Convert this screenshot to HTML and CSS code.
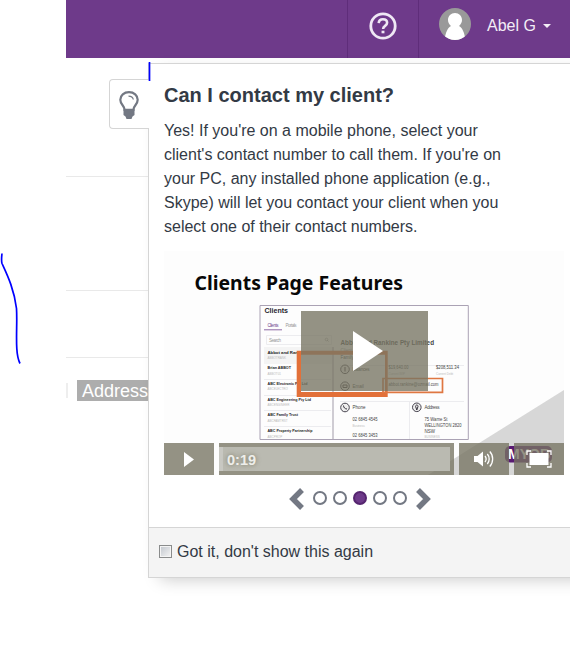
FILE: index.html
```html
<!DOCTYPE html>
<html lang="en">
<head>
<meta charset="utf-8">
<title>Clients</title>
<link rel="stylesheet" href="styles.css">
</head>
<body>
<div class="page">
  <header class="topbar">
    <a class="help" aria-label="Help">
      <svg width="28" height="28" viewBox="0 0 28 28" fill="none" stroke="#efe8f4"><circle cx="14" cy="14" r="12.2" stroke-width="2.800"/><path d="M9.700 11.200c.2-2.500 1.800-3.900 4.200-3.900 2.500 0 4.200 1.400 4.200 3.500 0 3.200-4 3-4 6.200" stroke-width="2.600"/><path d="M14 18.700v2.600" stroke-width="2.900"/></svg>
    </a>
    <div class="user">
      <svg class="avatar" width="32" height="32" viewBox="0 0 32 32"><defs><clipPath id="face"><circle cx="16" cy="16" r="16"/></clipPath></defs><g clip-path="url(#face)"><path fill="#999" d="M0 0h32v32H0z"/><path fill="#fff" d="M16 5c4 0 7 3 7 7 0 2.400-1.200 4.600-3 6 3.200 1.800 5.400 6 6.500 14h-21C6.600 24 8.800 19.800 12 18c-1.800-1.400-3-3.600-3-6 0-4 3-7 7-7z"/></g></svg>
      <span class="user-name">Abel G</span>
      <span class="caret"></span>
    </div>
  </header>
  <main class="content">
    <div class="row row-first"></div>
    <div class="row row-second"></div>
    <div class="row row-third"></div>
    <div class="tags"><span class="tag-edge"></span><span class="tag">Address</span></div>
  </main>
</div>

<section class="tip">
  <div class="tip-tab">
    <svg width="20" height="28" viewBox="0 0 20 28"><path d="M5.600 18.800c0-4-4.300-5.200-4.300-10C1.300 4.500 5 1.200 10 1.200s8.700 3.300 8.700 7.600c0 4.800-4.300 6-4.300 10z" fill="#fff" stroke="#737883" stroke-width="2.200"/><path d="M9.500 5.200c2.800 0 4.400 1.200 4.800 3.300" fill="none" stroke="#737883" stroke-width="1.300"/><path d="M4.500 18h11v6l-2 1.500-1 2.500h-5l-1-2.500-2-1.500z" fill="#737883"/></svg>
  </div>
  <div class="tip-body">
    <h1>Can I contact my client?</h1>
    <p>Yes! If you're on a mobile phone, select your client's contact number to call them. If you're on your PC, any installed phone application (e.g., Skype) will let you contact your client when you select one of their contact numbers.</p>
    <div class="video">
      <svg class="frame" width="400" height="224" viewBox="164 251 400 224">
        <path fill="#fdfdfd" d="M164 251h400v224H164z"/>
        <path fill="#d7d7d7" d="M564 390v85H428z"/>
        <text class="slide-title" x="194.500" y="290" textLength="208.500" lengthAdjust="spacingAndGlyphs">Clients Page Features</text>
        <path d="M260 305.500h208.300v134H260z" fill="#fdfdfd" stroke="#aaa2b4"/>
        <path fill="#f4f4f4" d="M264 347h68v17h-68z"/>
        <path fill="#cfccd3" d="M332 347h2v92h-2z"/>
        <path d="M264 329.800h18" stroke="#8d6aa5"/>
        <path d="M266.500 335.500h65v9h-65zM264 379.500h67M264 395.500h67M264 410.500h67M264 426.500h67M340 365.500h124M340 401.500h124M409.500 402v37" fill="none" stroke="#ececef"/>
        <g class="shot">
          <text class="app-title" x="264.500" y="313" textLength="23.500" lengthAdjust="spacingAndGlyphs">Clients</text>
          <text x="267.500" y="326.500" fill="#73458e" textLength="11">Clients</text>
          <text class="soft" x="285.500" y="326.500" textLength="11">Portals</text>
          <text class="soft" x="269" y="341.700" textLength="12">Search</text>
          <g class="names">
            <text x="267.500" y="353.500" textLength="39" lengthAdjust="spacingAndGlyphs">Abbot and Rankine</text>
            <text x="267.500" y="369.200" textLength="23.500" lengthAdjust="spacingAndGlyphs">Brian ABBOT</text>
            <text x="267.500" y="384.900" textLength="40" lengthAdjust="spacingAndGlyphs">ABC Electronic Pty Ltd</text>
            <text x="267.500" y="400.700" textLength="43.500" lengthAdjust="spacingAndGlyphs">ABC Engineering Pty Ltd</text>
            <text x="267.500" y="416.400" textLength="30.500" lengthAdjust="spacingAndGlyphs">ABC Family Trust</text>
            <text x="267.500" y="432.200" textLength="45" lengthAdjust="spacingAndGlyphs">ABC Property Partnership</text>
          </g>
          <g class="codes">
            <text x="267.500" y="358.800">ABBOTRANK</text><text x="267.500" y="374.500">ABBOT01</text><text x="267.500" y="390.200">ABCELECTRO</text><text x="267.500" y="406">ABCENGINEER</text><text x="267.500" y="421.700">ABCFAMTRST</text><text x="267.500" y="437.500">ABCPROP</text>
          </g>
          <text class="firm" x="340.500" y="344.700" textLength="93.500" lengthAdjust="spacingAndGlyphs">Abbot and Rankine Pty Limited</text>
          <text class="soft" x="340.500" y="351.500">Client Group</text>
          <text x="340.500" y="359">Family</text>
          <text x="352.500" y="371" textLength="17">Balances</text><text x="352.500" y="388">Email</text><text x="352.500" y="409.200">Phone</text><text x="424.500" y="409.200" textLength="15">Address</text>
          <text x="388.500" y="369.200" textLength="20" lengthAdjust="spacingAndGlyphs">$19,640.00</text><text x="436" y="369.200" textLength="23" lengthAdjust="spacingAndGlyphs">$208,511.34</text>
          <text x="388.500" y="386.400" textLength="50" lengthAdjust="spacingAndGlyphs">abbot.rankine@ozmail.com</text>
          <text x="352.500" y="420.500" textLength="25" lengthAdjust="spacingAndGlyphs">02 6845 4545</text><text x="352.500" y="436.800" textLength="25" lengthAdjust="spacingAndGlyphs">02 6845 3453</text>
          <text x="424.500" y="420.500" textLength="23" lengthAdjust="spacingAndGlyphs">75 Warne St</text><text x="424.500" y="426.800" textLength="37" lengthAdjust="spacingAndGlyphs">WELLINGTON 2820</text><text x="424.500" y="432.500">NSW</text>
          <g class="codes"><text x="388.500" y="375">Current WIP</text><text x="436" y="375">Current Debt</text><text x="352.500" y="427">Business</text><text x="424.500" y="438.300">BUSINESS</text></g>
        </g>
        <path d="M327 340l1.500 1.500" stroke="#999" stroke-width=".7"/><circle cx="326.500" cy="339.500" r="1.300" fill="none" stroke="#999" stroke-width=".6"/>
        <g fill="#eee" stroke="#47444f" stroke-width="1"><circle cx="345" cy="369.300" r="4.300"/><circle cx="345" cy="386.200" r="4.300"/><circle cx="345" cy="407.500" r="4.300"/><circle cx="416.800" cy="407.300" r="4.300"/></g>
        <path d="M343.500 405.500c0 2 1.500 3.500 3.500 3.500M343 385h4v2.500h-4zM345 367v4.500M416.800 410l-1.200-3.500c0-2 2.400-2 2.400 0z" fill="none" stroke="#35323b"/>
        <path fill="#e27039" fill-rule="evenodd" d="M296.700 350.800h91V397h-91zM301 354.800V392h84v-37.200z"/>
        <path d="M383 378.500h59.500v13.800H383z" fill="none" stroke="#df7742" stroke-width="1.700"/>
        <rect x="505" y="446" width="47" height="16.500" rx="5" fill="#591a72"/>
        <text class="brand" x="508" y="459" textLength="42" lengthAdjust="spacingAndGlyphs">MYOB</text>
      </svg>
      <div class="big-play"><svg width="30" height="40" viewBox="0 0 30 40"><path d="M0 0l30 20L0 40z" fill="#fff"/></svg></div>
      <div class="controls">
        <div class="control"><svg width="10" height="15" viewBox="0 0 10 15"><path d="M0 0l10 7.500L0 15z" fill="#fff"/></svg></div>
        <div class="seek"><span class="seek-track">0:19</span></div>
        <div class="control"><svg width="22" height="20" viewBox="0 0 22 20"><path d="M1 7h3.500L10 2.500v15L4.500 13H1z" fill="#fff"/><path d="M12 7c1.300 1.700 1.300 4.300 0 6M14.300 5c2.500 2.800 2.500 7.200 0 10M16.800 2.500c3.800 4 3.800 11 0 15" fill="none" stroke="#fff" stroke-width="1.300"/></svg></div>
        <div class="control"><svg width="26" height="18" viewBox="0 0 26 18"><path d="M3.500 3h19v12h-19z" fill="#fff"/><path d="M1 5V1h4M21 1h4v4M25 13v4h-4M5 17H1v-4" fill="none" stroke="#fff" stroke-width="1.300"/></svg></div>
      </div>
    </div>
    <nav class="pager">
      <svg width="16" height="22" viewBox="0 0 16 22"><path d="M13 2l-9 9 9 9" fill="none" stroke="#737883" stroke-width="5.500"/></svg>
      <div class="dots"><span class="dot"></span><span class="dot"></span><span class="dot dot-active"></span><span class="dot"></span><span class="dot"></span></div>
      <svg width="16" height="22" viewBox="0 0 16 22"><path d="M3 2l9 9-9 9" fill="none" stroke="#737883" stroke-width="5.500"/></svg>
    </nav>
  </div>
  <label class="tip-footer"><span class="checkbox"></span>Got it, don't show this again</label>
</section>
<svg class="pen" width="160" height="370" viewBox="0 0 160 370" fill="none" stroke="#00f" stroke-width="1.700"><path d="M149.500 62v19"/><path d="M2 253.500c-.5 4-.8 7 0 10 5 11 12 25 14.500 45 .8 13-.5 26 .3 40 .4 7 1.200 11 3.200 15"/></svg>
</body>
</html>
```

FILE: styles.css
```css
* { box-sizing: border-box; }
body {
  margin: 0;
  height: 661px;
  overflow: hidden;
  position: relative;
  background: #fff;
  color: #333a45;
  font: 16px/24px "Liberation Sans", Arial, sans-serif;
}
svg { display: block; flex: none; }
.page { margin-left: 66px; }
.topbar {
  display: flex;
  justify-content: flex-end;
  height: 58px;
  background: #6e3a8a;
  color: #f3edf6;
}
.help {
  display: flex;
  justify-content: center;
  width: 72px;
  padding-top: 12px;
  border: solid #5f2d7a;
  border-width: 0 1px;
}
.user { display: flex; align-items: flex-start; width: 151px; padding: 8px 0 0 20px; }
.user-name { margin: 6px 7px 0 16px; }
.caret { margin-top: 16px; border: 4px solid transparent; border-top-color: #f3edf6; border-bottom: 0; }
.row { border-bottom: 1px solid #e9e9e9; }
.row-first { height: 119px; }
.row-second { height: 114px; }
.row-third { height: 67px; }
.tags { display: flex; align-items: center; gap: 9px; padding-top: 22px; }
.tag-edge { width: 2px; height: 15px; background: #eee; }
.tag { width: 90px; height: 21px; padding-left: 5px; background: #adadad; color: #fff; font-size: 18px; line-height: 22px; }
.tip {
  position: absolute;
  left: 148px;
  top: 63px;
  width: 440px;
  height: 515px;
  display: flex;
  flex-direction: column;
  background: #fff;
  border: 1px solid #d5d5d5;
  box-shadow: 8px 5px 16px -4px rgba(0, 0, 0, .22);
}
.tip-tab {
  position: absolute;
  left: -40px;
  top: 15px;
  width: 40px;
  height: 50px;
  padding: 11px 0 0 10px;
  background: #fff;
  border: 1px solid #d5d5d5;
  border-right: 0;
  border-radius: 4px 0 0 4px;
}
.tip-tab svg { margin-left: -1px; }
.tip-body { flex: 1; padding: 18px 15px 0; }
h1 { margin: 0 0 11px; font-size: 20px; line-height: 26px; white-space: nowrap; }
p { margin: 0 0 12px; width: 350px; }
.video { position: relative; width: 400px; height: 224px; overflow: hidden; }
.big-play {
  position: absolute;
  left: 137px;
  top: 60px;
  width: 127px;
  height: 80px;
  display: flex;
  align-items: center;
  padding-left: 52px;
  background: rgba(119, 117, 99, .79);
}
.controls { position: absolute; inset: 192px 0 0; display: flex; gap: 5px; }
.control { width: 50px; display: flex; align-items: center; justify-content: center; background: rgba(119, 117, 99, .79); }
.seek { flex: 1; padding: 4px 4px 4px 0; background: rgba(119, 117, 99, .79); }
.seek-track {
  display: block;
  height: 24px;
  padding-left: 4px;
  border-left: 4px solid #c8c8c2;
  background: #babab1;
  color: #eeeeea;
  font-size: 14.500px;
  font-weight: bold;
  line-height: 26px;
  text-shadow: 0 0 5px #77745f;
}
.pager { display: flex; justify-content: center; align-items: center; gap: 8px; width: 392px; margin-top: 13px; }
.dots { display: flex; gap: 6px; margin-top: -3px; }
.dot { width: 14px; height: 14px; border: 2px solid #737883; border-radius: 50%; }
.dot-active { background: #6e3a8a; border-color: #55256f; }
.tip-footer {
  display: flex;
  align-items: center;
  gap: 5px;
  height: 50px;
  padding: 0 0 2px 10px;
  background: #f4f4f4;
  border-top: 1px solid #d5d5d5;
}
.checkbox {
  width: 13px;
  height: 13px;
  border: 1px solid #8a8c8c;
  background: linear-gradient(135deg, #c0c5cc, #f5f5f5);
  box-shadow: inset 0 0 0 1px #f4f4f4;
}
.slide-title { font: bold 20px "Noto Sans", "Open Sans", sans-serif; fill: #080808; }
.shot { font-size: 4.500px; fill: #444; }
.app-title { font-size: 7.500px; font-weight: bold; fill: #25252f; }
.names { font-size: 4.200px; font-weight: bold; fill: #222; }
.codes { font-size: 3px; fill: #bbb; }
.soft { fill: #999; }
.firm { font-size: 6.700px; font-weight: bold; }
.brand { font: bold 14px "Liberation Sans", sans-serif; fill: #fff; }
.pen { position: absolute; left: 0; top: 0; pointer-events: none; }
```
